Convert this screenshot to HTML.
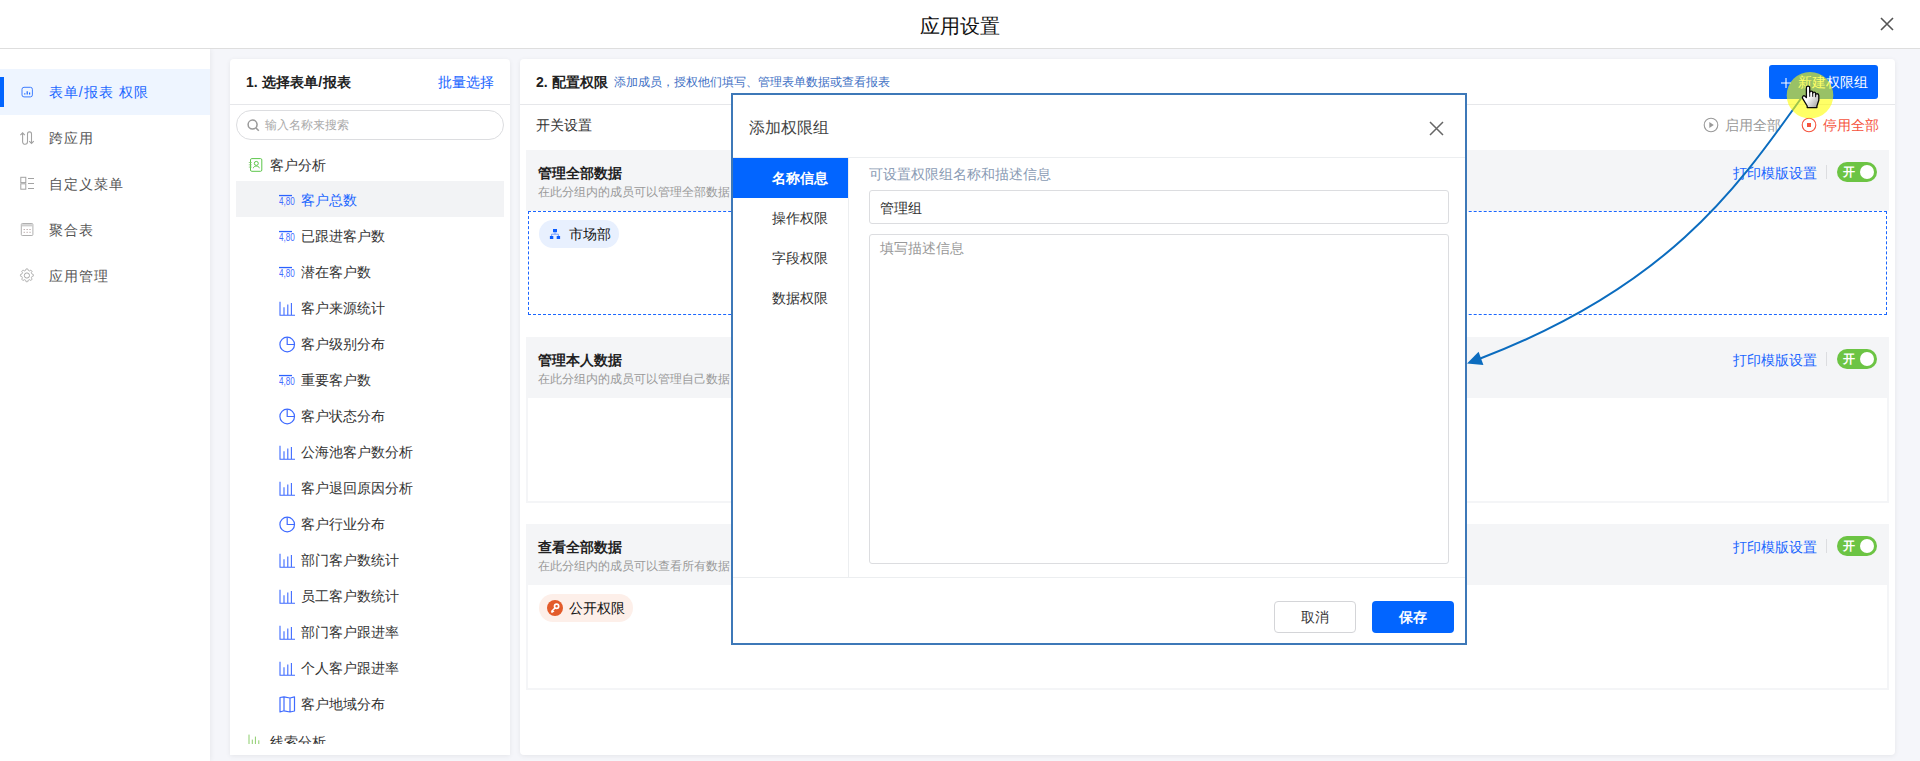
<!DOCTYPE html>
<html><head><meta charset="utf-8">
<style>
*{margin:0;padding:0;box-sizing:border-box}
html,body{width:1920px;height:761px;overflow:hidden;background:#f5f6fa;font-family:"Liberation Sans",sans-serif;color:#333}
.a{position:absolute}
.t{position:absolute;white-space:nowrap;line-height:1}
#hdr{left:0;top:0;width:1920px;height:49px;background:#fff;border-bottom:1px solid #dedede}
#side{left:0;top:49px;width:210px;height:712px;background:#fff;box-shadow:1px 0 5px rgba(0,0,0,0.06);clip-path:inset(0 -12px 0 0)}
.card{background:#fff;border-radius:4px;box-shadow:0 1px 5px rgba(0,0,0,0.07)}
.blue{color:#1a66ff}
.sec{position:absolute;left:526px;width:1363px;background:#f4f5f7}
.secb{position:absolute;left:528px;width:1359px;background:#fff}
.st{position:absolute;white-space:nowrap;line-height:1;font-size:14px;font-weight:bold;color:#222;left:538px}
.ss{position:absolute;white-space:nowrap;line-height:1;font-size:12px;color:#999;left:538px}
.pr{position:absolute;white-space:nowrap;line-height:1;font-size:14px;color:#1a66ff;left:1733px}
.dv{position:absolute;left:1826px;width:1px;height:14px;background:#dcdde0}
.tg{position:absolute;left:1837px;width:40px;height:20px;border-radius:10px;background:#6cc444}
.tg i{position:absolute;right:3px;top:3px;width:14px;height:14px;border-radius:7px;background:#fff}
.tg b{position:absolute;left:6px;top:4px;font-size:12px;line-height:1;color:#fff;font-weight:bold}
</style></head><body>
<div id="hdr" class="a"></div>
<div class="t" style="left:920px;top:16px;font-size:20px;color:#111">应用设置</div>
<svg class="a" style="left:1880px;top:17px" width="14" height="14" viewBox="0 0 14 14"><path d="M1 1L13 13M13 1L1 13" stroke="#555" stroke-width="1.6"/></svg>

<div id="side" class="a"></div>
<div class="a" style="left:0;top:69px;width:210px;height:46px;background:#eef5ff"></div>
<div class="a" style="left:0;top:77px;width:4px;height:30px;background:#0265ff"></div>
<svg class="a" style="left:0;top:0" width="40" height="290" viewBox="0 0 40 290"><rect x="22" y="87.3" width="10.4" height="9.6" rx="2" fill="none" stroke="#2a70ff" stroke-width="0.9"/><path d="M24.8 94.6V93.2M27.2 94.6V91.2M29.6 94.6V92.4" stroke="#1a66ff" stroke-width="1.2"/></svg>
<div class="t blue" style="left:49px;top:85px;font-size:14px;letter-spacing:.9px">表单<span style="letter-spacing:1.4px">/</span>报表 权限</div>
<svg class="a" style="left:0;top:0" width="40" height="290" viewBox="0 0 40 290"><path d="M20.4 135.2L22.6 132.8L24.8 135.2M22.6 132.8V141.8A2.45 2.45 0 0 0 27.5 141.8V133.9A2 2 0 0 1 31.5 133.9V143.4M29.2 141.1L31.5 143.4L33.8 141.1" fill="none" stroke="#a3a3a3" stroke-width="1.1"/></svg>
<div class="t" style="left:49px;top:131px;font-size:14px;color:#555;letter-spacing:.9px">跨应用</div>
<svg class="a" style="left:0;top:0" width="40" height="290" viewBox="0 0 40 290"><rect x="20.8" y="177.3" width="5" height="5.3" fill="none" stroke="#a3a3a3"/><rect x="20.8" y="183.8" width="5" height="5.4" fill="none" stroke="#a3a3a3"/><path d="M28 178.5H34M28 183.5H34M28 188.5H34" stroke="#a3a3a3"/></svg>
<div class="t" style="left:49px;top:177px;font-size:14px;color:#555;letter-spacing:.9px">自定义菜单</div>
<svg class="a" style="left:0;top:0" width="40" height="290" viewBox="0 0 40 290"><rect x="21.3" y="223.5" width="11.6" height="12" rx="1" fill="none" stroke="#b0b0b0"/><path d="M21.8 225.3H32.4" stroke="#cfcfcf" stroke-width="2.2"/><path d="M23.6 229.5h1.3M26.5 229.5h1.3M29.4 229.5h1.3M23.6 232.3h1.3M26.5 232.3h1.3M29.4 232.3h1.3" stroke="#b8a8a8"/></svg>
<div class="t" style="left:49px;top:223px;font-size:14px;color:#555;letter-spacing:.9px">聚合表</div>
<svg class="a" style="left:0;top:0" width="40" height="290" viewBox="0 0 40 290"><path d="M26.9 268.9L27.2 268.9L27.4 268.9L27.7 268.9L27.9 269.2L28.0 269.7L28.1 270.1L28.3 270.4L28.5 270.5L28.6 270.6L28.8 270.6L29.0 270.7L29.2 270.8L29.4 270.9L29.7 270.8L30.1 270.5L30.5 270.3L30.9 270.2L31.1 270.4L31.3 270.6L31.5 270.7L31.6 270.9L31.8 271.1L32.0 271.3L31.9 271.7L31.7 272.1L31.4 272.5L31.3 272.8L31.4 273.0L31.5 273.2L31.6 273.4L31.6 273.6L31.7 273.7L31.8 273.9L32.1 274.1L32.5 274.2L33.0 274.3L33.3 274.5L33.3 274.8L33.3 275.0L33.4 275.3L33.3 275.6L33.3 275.8L33.3 276.1L33.0 276.3L32.5 276.4L32.1 276.5L31.8 276.7L31.7 276.9L31.6 277.0L31.6 277.2L31.5 277.4L31.4 277.6L31.3 277.8L31.4 278.1L31.7 278.5L31.9 278.9L32.0 279.3L31.8 279.5L31.6 279.7L31.5 279.9L31.3 280.0L31.1 280.2L30.9 280.4L30.5 280.3L30.1 280.1L29.7 279.8L29.4 279.7L29.2 279.8L29.0 279.9L28.8 280.0L28.6 280.0L28.5 280.1L28.3 280.2L28.1 280.5L28.0 280.9L27.9 281.4L27.7 281.7L27.4 281.7L27.2 281.7L26.9 281.8L26.6 281.7L26.4 281.7L26.1 281.7L25.9 281.4L25.8 280.9L25.7 280.5L25.5 280.2L25.3 280.1L25.2 280.0L25.0 280.0L24.8 279.9L24.6 279.8L24.4 279.7L24.1 279.8L23.7 280.1L23.3 280.3L22.9 280.4L22.7 280.2L22.5 280.0L22.3 279.9L22.2 279.7L22.0 279.5L21.8 279.3L21.9 278.9L22.1 278.5L22.4 278.1L22.5 277.8L22.4 277.6L22.3 277.4L22.2 277.2L22.2 277.0L22.1 276.9L22.0 276.7L21.7 276.5L21.3 276.4L20.8 276.3L20.5 276.1L20.5 275.8L20.5 275.6L20.4 275.3L20.5 275.0L20.5 274.8L20.5 274.5L20.8 274.3L21.3 274.2L21.7 274.1L22.0 273.9L22.1 273.7L22.2 273.6L22.2 273.4L22.3 273.2L22.4 273.0L22.5 272.8L22.4 272.5L22.1 272.1L21.9 271.7L21.8 271.3L22.0 271.1L22.2 270.9L22.3 270.7L22.5 270.6L22.7 270.4L22.9 270.2L23.3 270.3L23.7 270.5L24.1 270.8L24.4 270.9L24.6 270.8L24.8 270.7L25.0 270.6L25.2 270.6L25.3 270.5L25.5 270.4L25.7 270.1L25.8 269.7L25.9 269.2L26.1 268.9L26.4 268.9L26.6 268.9Z" fill="none" stroke="#a8a8a8" stroke-width="1"/><circle cx="26.9" cy="275.5" r="2.6" fill="none" stroke="#a8a8a8" stroke-width="1"/></svg>
<div class="t" style="left:49px;top:269px;font-size:14px;color:#555;letter-spacing:.9px">应用管理</div>

<!-- left card -->
<div class="a card" style="left:230px;top:59px;width:280px;height:696px;border-radius:4px 4px 0 0"></div>
<div class="a" style="left:230px;top:104px;width:280px;height:1px;background:#e6e7ea"></div>
<div class="t" style="left:246px;top:75px;font-size:14px;font-weight:bold;color:#222">1. 选择表单<span style="padding:0 .7px">/</span>报表</div>
<div class="t blue" style="left:438px;top:75px;font-size:14px">批量选择</div>
<div class="a" style="left:236px;top:110px;width:268px;height:30px;border:1px solid #dcdde0;border-radius:15px"></div>
<svg class="a" style="left:247px;top:119px" width="13" height="13" viewBox="0 0 13 13"><circle cx="5.6" cy="5.6" r="4.5" fill="none" stroke="#9a9a9a" stroke-width="1.5"/><path d="M9 9L11.8 11.8" stroke="#9a9a9a" stroke-width="1.6"/></svg>
<div class="t" style="left:265px;top:119px;font-size:12px;color:#aaa">输入名称来搜索</div>
<svg class="a" style="left:240px;top:150px" width="30" height="30" viewBox="240 150 30 30"><rect x="250.5" y="158.6" width="11.3" height="12.7" rx="1.3" fill="none" stroke="#5cc64a" stroke-width="1"/><path d="M248.8 162.5H251.8M248.8 164.8H251.8M248.8 167.1H251.8" stroke="#7cc86a" stroke-width="0.8"/><circle cx="256.3" cy="163.4" r="2" fill="none" stroke="#5cc64a" stroke-width="1"/><path d="M253.3 168.2C253.6 165.4 259 165.4 259.4 168.2" fill="none" stroke="#5cc64a" stroke-width="1"/></svg>
<div class="t" style="left:270px;top:158px;font-size:14px">客户分析</div>
<div class="a" style="left:236px;top:181px;width:268px;height:36px;background:#f2f3f5"></div>
<svg class="a" style="left:279px;top:192px" width="17" height="16" viewBox="0 0 17 16"><rect x="0" y="2.9" width="13" height="1.3" fill="#2a62ff"/><text x="0" y="13.4" font-size="10" font-family="Liberation Sans" fill="#3f6bff" textLength="15.8" lengthAdjust="spacingAndGlyphs">4,80</text></svg>
<div class="t" style="left:301px;top:193px;font-size:14px;color:#1a66ff">客户总数</div>
<svg class="a" style="left:279px;top:228px" width="17" height="16" viewBox="0 0 17 16"><rect x="0" y="2.9" width="13" height="1.3" fill="#2a62ff"/><text x="0" y="13.4" font-size="10" font-family="Liberation Sans" fill="#3f6bff" textLength="15.8" lengthAdjust="spacingAndGlyphs">4,80</text></svg>
<div class="t" style="left:301px;top:229px;font-size:14px;color:#333">已跟进客户数</div>
<svg class="a" style="left:279px;top:264px" width="17" height="16" viewBox="0 0 17 16"><rect x="0" y="2.9" width="13" height="1.3" fill="#2a62ff"/><text x="0" y="13.4" font-size="10" font-family="Liberation Sans" fill="#3f6bff" textLength="15.8" lengthAdjust="spacingAndGlyphs">4,80</text></svg>
<div class="t" style="left:301px;top:265px;font-size:14px;color:#333">潜在客户数</div>
<svg class="a" style="left:279px;top:300px" width="17" height="16" viewBox="0 0 17 16"><path d="M1 1.7V15.3H16" fill="none" stroke="#3f6bff" stroke-width="1.1"/><path d="M5 7.2V15M8.8 4.5V15M12.4 2.9V15" stroke="#3f6bff" stroke-width="1.1"/></svg>
<div class="t" style="left:301px;top:301px;font-size:14px;color:#333">客户来源统计</div>
<svg class="a" style="left:279px;top:336px" width="17" height="17" viewBox="0 0 17 17"><circle cx="8.2" cy="8.5" r="7.3" fill="none" stroke="#3f6bff" stroke-width="1.2"/><path d="M8.2 1.2V8.5H15.5" fill="none" stroke="#3f6bff" stroke-width="1.2"/></svg>
<div class="t" style="left:301px;top:337px;font-size:14px;color:#333">客户级别分布</div>
<svg class="a" style="left:279px;top:372px" width="17" height="16" viewBox="0 0 17 16"><rect x="0" y="2.9" width="13" height="1.3" fill="#2a62ff"/><text x="0" y="13.4" font-size="10" font-family="Liberation Sans" fill="#3f6bff" textLength="15.8" lengthAdjust="spacingAndGlyphs">4,80</text></svg>
<div class="t" style="left:301px;top:373px;font-size:14px;color:#333">重要客户数</div>
<svg class="a" style="left:279px;top:408px" width="17" height="17" viewBox="0 0 17 17"><circle cx="8.2" cy="8.5" r="7.3" fill="none" stroke="#3f6bff" stroke-width="1.2"/><path d="M8.2 1.2V8.5H15.5" fill="none" stroke="#3f6bff" stroke-width="1.2"/></svg>
<div class="t" style="left:301px;top:409px;font-size:14px;color:#333">客户状态分布</div>
<svg class="a" style="left:279px;top:444px" width="17" height="16" viewBox="0 0 17 16"><path d="M1 1.7V15.3H16" fill="none" stroke="#3f6bff" stroke-width="1.1"/><path d="M5 7.2V15M8.8 4.5V15M12.4 2.9V15" stroke="#3f6bff" stroke-width="1.1"/></svg>
<div class="t" style="left:301px;top:445px;font-size:14px;color:#333">公海池客户数分析</div>
<svg class="a" style="left:279px;top:480px" width="17" height="16" viewBox="0 0 17 16"><path d="M1 1.7V15.3H16" fill="none" stroke="#3f6bff" stroke-width="1.1"/><path d="M5 7.2V15M8.8 4.5V15M12.4 2.9V15" stroke="#3f6bff" stroke-width="1.1"/></svg>
<div class="t" style="left:301px;top:481px;font-size:14px;color:#333">客户退回原因分析</div>
<svg class="a" style="left:279px;top:516px" width="17" height="17" viewBox="0 0 17 17"><circle cx="8.2" cy="8.5" r="7.3" fill="none" stroke="#3f6bff" stroke-width="1.2"/><path d="M8.2 1.2V8.5H15.5" fill="none" stroke="#3f6bff" stroke-width="1.2"/></svg>
<div class="t" style="left:301px;top:517px;font-size:14px;color:#333">客户行业分布</div>
<svg class="a" style="left:279px;top:552px" width="17" height="16" viewBox="0 0 17 16"><path d="M1 1.7V15.3H16" fill="none" stroke="#3f6bff" stroke-width="1.1"/><path d="M5 7.2V15M8.8 4.5V15M12.4 2.9V15" stroke="#3f6bff" stroke-width="1.1"/></svg>
<div class="t" style="left:301px;top:553px;font-size:14px;color:#333">部门客户数统计</div>
<svg class="a" style="left:279px;top:588px" width="17" height="16" viewBox="0 0 17 16"><path d="M1 1.7V15.3H16" fill="none" stroke="#3f6bff" stroke-width="1.1"/><path d="M5 7.2V15M8.8 4.5V15M12.4 2.9V15" stroke="#3f6bff" stroke-width="1.1"/></svg>
<div class="t" style="left:301px;top:589px;font-size:14px;color:#333">员工客户数统计</div>
<svg class="a" style="left:279px;top:624px" width="17" height="16" viewBox="0 0 17 16"><path d="M1 1.7V15.3H16" fill="none" stroke="#3f6bff" stroke-width="1.1"/><path d="M5 7.2V15M8.8 4.5V15M12.4 2.9V15" stroke="#3f6bff" stroke-width="1.1"/></svg>
<div class="t" style="left:301px;top:625px;font-size:14px;color:#333">部门客户跟进率</div>
<svg class="a" style="left:279px;top:660px" width="17" height="16" viewBox="0 0 17 16"><path d="M1 1.7V15.3H16" fill="none" stroke="#3f6bff" stroke-width="1.1"/><path d="M5 7.2V15M8.8 4.5V15M12.4 2.9V15" stroke="#3f6bff" stroke-width="1.1"/></svg>
<div class="t" style="left:301px;top:661px;font-size:14px;color:#333">个人客户跟进率</div>
<svg class="a" style="left:279px;top:696px" width="17" height="17" viewBox="0 0 17 17"><path d="M1 1.5L5 0.8L11 2L15.5 0.8V15L11 16L5 14.8L1 16Z M5 0.8V14.8 M11 2V16" fill="none" stroke="#3f6bff" stroke-width="1.2" stroke-linejoin="round"/></svg>
<div class="t" style="left:301px;top:697px;font-size:14px;color:#333">客户地域分布</div>
<div class="a" style="left:230px;top:726px;width:280px;height:18px;overflow:hidden">
  <svg class="a" style="left:0;top:0" width="40" height="18" viewBox="230 726 40 18"><path d="M249 734.6V744M252.3 739.6V744M255.4 736.6V744M258.8 740.3V744" stroke="#8ccd6c" stroke-width="1"/></svg>
  <div class="t" style="left:40px;top:9px;font-size:14px;color:#333">线索分析</div>
</div>

<!-- right card -->
<div class="a card" style="left:520px;top:59px;width:1375px;height:696px"></div>
<div class="a" style="left:520px;top:104px;width:1375px;height:1px;background:#e6e7ea"></div>
<div class="t" style="left:536px;top:75px;font-size:14px;font-weight:bold;color:#222">2. 配置权限</div>
<div class="t" style="left:614px;top:76px;font-size:12px;color:#3e6fc4">添加成员，授权他们填写、管理表单数据或查看报表</div>
<div class="a" style="left:1769px;top:65px;width:109px;height:34px;background:#0265ff;border-radius:3px"></div>
<svg class="a" style="left:1781px;top:78px" width="10" height="10" viewBox="0 0 10 10"><path d="M5 0V10M0 5H10" stroke="#fff" stroke-width="1.1"/></svg>
<div class="t" style="left:1798px;top:75px;font-size:14px;color:#fff">新建权限组</div>
<div class="t" style="left:536px;top:118px;font-size:14px">开关设置</div>
<svg class="a" style="left:1703px;top:117px" width="16" height="16" viewBox="0 0 16 16"><circle cx="8" cy="8" r="6.8" fill="none" stroke="#999" stroke-width="1.1"/><path d="M6.3 5V11L10.8 8Z" fill="#999"/></svg>
<div class="t" style="left:1725px;top:118px;font-size:14px;color:#999">启用全部</div>
<svg class="a" style="left:1801px;top:117px" width="16" height="16" viewBox="0 0 16 16"><circle cx="8" cy="8" r="6.8" fill="none" stroke="#f5533d" stroke-width="1.1"/><rect x="6" y="6" width="4" height="4" fill="#f5533d"/></svg>
<div class="t" style="left:1823px;top:118px;font-size:14px;color:#f5533d">停用全部</div>

<!-- section 1 -->
<div class="sec" style="top:150px;height:61px"></div>
<div class="a" style="left:528px;top:211px;width:1359px;height:104px;background:#fff;border:1px dashed #1a66ff"></div>
<div class="st" style="top:166px">管理全部数据</div>
<div class="ss" style="top:186px">在此分组内的成员可以管理全部数据</div>
<div class="pr" style="top:166px">打印模版设置</div>
<div class="dv" style="top:165px"></div>
<div class="tg" style="top:162px"><b>开</b><i></i></div>
<div class="a" style="left:539px;top:220px;width:80px;height:28px;border-radius:14px;background:#e8f0fe"></div>
<svg class="a" style="left:549px;top:228px" width="12" height="12" viewBox="0 0 12 12"><rect x="4" y="1" width="4" height="3.2" fill="#0a5cff"/><rect x="0.9" y="8" width="3.4" height="3" fill="#0a5cff"/><rect x="7.7" y="8" width="3.4" height="3" fill="#0a5cff"/><path d="M6 4.2V6.2M2.6 8V6.2H9.4V8" fill="none" stroke="#5d8eff" stroke-width="0.8"/></svg>
<div class="t" style="left:569px;top:227px;font-size:14px;color:#111">市场部</div>

<!-- section 2 -->
<div class="sec" style="top:337px;height:166px"></div>
<div class="secb" style="top:398px;height:103px"></div>
<div class="st" style="top:353px">管理本人数据</div>
<div class="ss" style="top:373px">在此分组内的成员可以管理自己数据</div>
<div class="pr" style="top:353px">打印模版设置</div>
<div class="dv" style="top:352px"></div>
<div class="tg" style="top:349px"><b>开</b><i></i></div>

<!-- section 3 -->
<div class="sec" style="top:524px;height:166px"></div>
<div class="secb" style="top:585px;height:103px"></div>
<div class="st" style="top:540px">查看全部数据</div>
<div class="ss" style="top:560px">在此分组内的成员可以查看所有数据</div>
<div class="pr" style="top:540px">打印模版设置</div>
<div class="dv" style="top:539px"></div>
<div class="tg" style="top:536px"><b>开</b><i></i></div>
<div class="a" style="left:539px;top:594px;width:94px;height:28px;border-radius:14px;background:#fdefe9"></div>
<svg class="a" style="left:547px;top:600px" width="16" height="16" viewBox="0 0 16 16"><circle cx="8" cy="8" r="8" fill="#e35b2a"/><circle cx="9.6" cy="6.3" r="2.1" fill="none" stroke="#fff" stroke-width="1.7"/><path d="M8.2 7.8L4.3 11.7M5.6 10.4L6.9 11.7M4.5 11.5L5.6 12.6" stroke="#fff" stroke-width="1.6"/></svg>
<div class="t" style="left:569px;top:601px;font-size:14px;color:#111">公开权限</div>

<!-- modal -->
<div class="a" style="left:731px;top:93px;width:736px;height:552px;background:#fff;border:2px solid #3d78b8"></div>
<div class="t" style="left:749px;top:120px;font-size:16px;color:#444">添加权限组</div>
<svg class="a" style="left:1429px;top:121px" width="15" height="15" viewBox="0 0 15 15"><path d="M1 1L14 14M14 1L1 14" stroke="#666" stroke-width="1.5"/></svg>
<div class="a" style="left:733px;top:157px;width:732px;height:1px;background:#eceef0"></div>
<div class="a" style="left:848px;top:158px;width:1px;height:419px;background:#eceef0"></div>
<div class="a" style="left:733px;top:577px;width:732px;height:1px;background:#eceef0"></div>
<div class="a" style="left:733px;top:158px;width:115px;height:40px;background:#0265ff"></div>
<div class="t" style="left:772px;top:171px;font-size:14px;color:#fff;font-weight:bold">名称信息</div>
<div class="t" style="left:772px;top:211px;font-size:14px;color:#333">操作权限</div>
<div class="t" style="left:772px;top:251px;font-size:14px;color:#333">字段权限</div>
<div class="t" style="left:772px;top:291px;font-size:14px;color:#333">数据权限</div>
<div class="t" style="left:869px;top:167px;font-size:14px;color:#8a9bb4">可设置权限组名称和描述信息</div>
<div class="a" style="left:869px;top:190px;width:580px;height:34px;border:1px solid #dcdde0;border-radius:3px"></div>
<div class="t" style="left:880px;top:201px;font-size:14px;color:#333">管理组</div>
<div class="a" style="left:869px;top:234px;width:580px;height:330px;border:1px solid #dcdde0;border-radius:3px"></div>
<div class="t" style="left:880px;top:241px;font-size:14px;color:#999">填写描述信息</div>
<div class="a" style="left:1274px;top:601px;width:82px;height:32px;border:1px solid #d4d5d8;border-radius:4px;background:#fff"></div>
<div class="t" style="left:1301px;top:610px;font-size:14px;color:#333">取消</div>
<div class="a" style="left:1372px;top:601px;width:82px;height:32px;border-radius:4px;background:#0265ff"></div>
<div class="t" style="left:1399px;top:610px;font-size:14px;color:#fff;font-weight:bold">保存</div>

<!-- annotation -->
<svg class="a" style="left:0;top:0;pointer-events:none" width="1920" height="761" viewBox="0 0 1920 761">
  <defs><linearGradient id="hg" x1="0" y1="0" x2="1" y2="1"><stop offset="0.45" stop-color="#fff"/><stop offset="1" stop-color="#9a9a9a"/></linearGradient></defs>
  <path d="M1801 98.5 C1738.1 186.3 1669.5 286.3 1479 359" fill="none" stroke="#0b6cbf" stroke-width="2"/>
  <path d="M1467 363.4 L1478.6 351.8 L1483.4 365.1 Z" fill="#0b6cbf"/>
  <circle cx="1810" cy="95.3" r="23.3" fill="#ffff00" fill-opacity="0.6"/>
  <g transform="translate(1800 84)">
  <path d="M6.4 3.8C6.4 1.6 9.7 1.6 9.7 3.8V8.6C9.7 6.6 12.7 6.6 12.7 8.6V9.6C12.7 7.7 15.6 7.7 15.6 9.6V11.2C15.6 9.2 18.8 9.2 18.8 11.6V16.2L16.9 22V23.6H7.2V22L2.6 14.3C1.8 12.8 3.6 10.8 5 12.2L6.4 13.6Z" fill="url(#hg)" stroke="#0a0a0a" stroke-width="1.3" stroke-linejoin="round"/>
  <path d="M9.7 8.6V12.8M12.7 9.6V12.8M15.6 11.2V13.2" stroke="#111" stroke-width="1"/>
  </g>
</svg>
</body></html>
